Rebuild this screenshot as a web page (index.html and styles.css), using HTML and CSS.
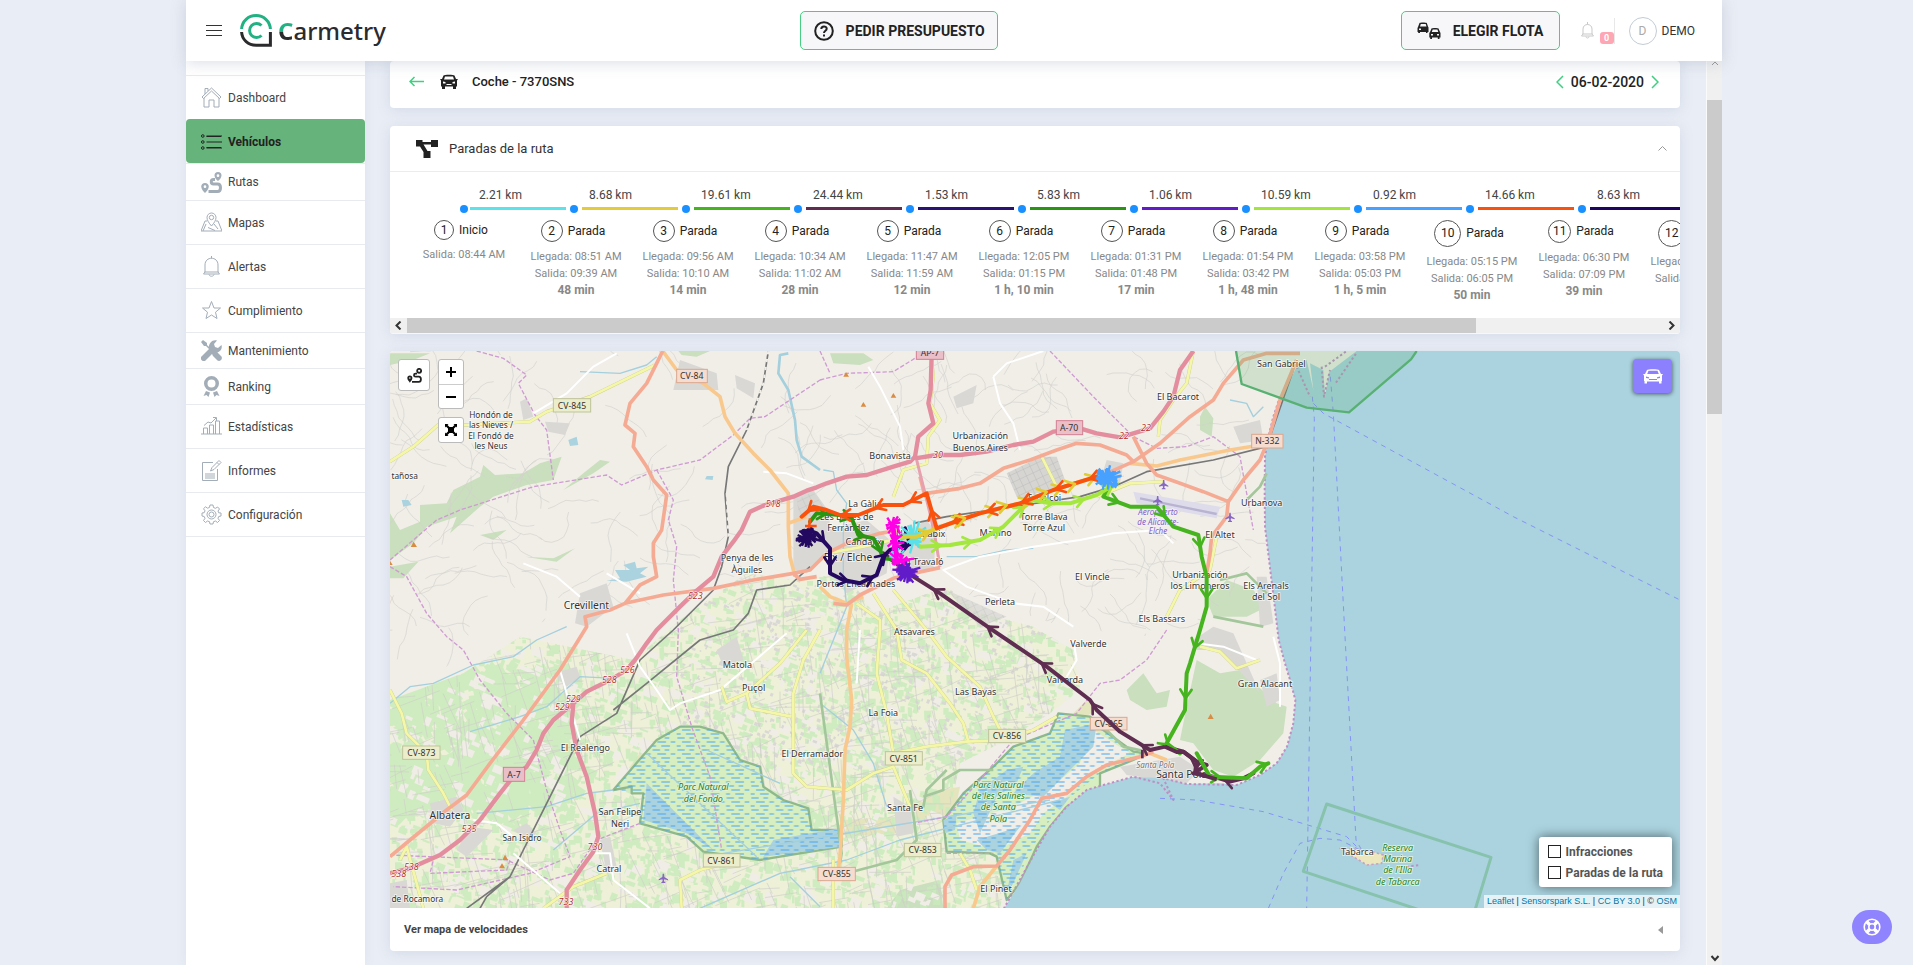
FILE: index.html
```html
<!DOCTYPE html>
<html lang="es">
<head>
<meta charset="utf-8">
<title>Carmetry</title>
<link rel="stylesheet" href="styles.css">
</head>
<body>
<div class="page">
  <header class="topbar">
    <div class="brand">
      <button class="menu-btn" aria-label="Menú"><span></span><span></span><span></span></button>
      <a class="logo" href="#">
        <svg width="32" height="33" viewBox="0 0 32 33" fill="none" stroke-width="3">
          <path d="M1.6 15C2 7 8.500 1.600 16 1.600S30 7 30.400 15" stroke="#21b183"/>
          <path d="M1.600 18C2 26 8.500 31.200 16 31.200H30.400V18" stroke="#2b2b2e"/>
          <path d="M21.500 11.500A7 7 0 1 0 21.500 21.500" stroke="#21b183"/>
        </svg>
        <span class="wordmark"><span class="wordmark-c">C</span>armetry</span>
      </a>
    </div>
    <button class="outline-btn quote-btn">
      <svg width="20" height="20" viewBox="0 0 20 20" fill="none" stroke="#222" stroke-width="2"><circle cx="10" cy="10" r="8.800"/><path d="M7.300 8C7.300 4.700 12.700 4.700 12.700 7.800 12.700 9.800 10 9.800 10 12"/><path d="M10 13.500V15.500"/></svg>
      PEDIR PRESUPUESTO
    </button>
    <div class="tools">
      <button class="outline-btn fleet-btn">
        <svg width="24" height="17" viewBox="0 0 24 17"><path fill="#222" fill-rule="evenodd" d="M1 5 2.500 1C3 .2 9 .2 9.800 1L11 4.500 11.500 5.500V10H10.500V11H9V10H3V11H1.200V10H.5V6ZM3 4.500H9.500L8.700 2H3.800ZM2 6.500V8H4V6.500ZM13 10 14.500 6.500C15 5.700 21 5.700 21.500 6.500L23 10 23.500 11V15.500H22.500V17H20.800V15.500H15V17H13.200V15.500H12.300V11ZM14.800 10H21.300L20.400 7.500H15.700ZM14 12V13.500H16V12ZM20 12V13.500H22V12Z"/></svg>
        ELEGIR FLOTA
      </button>
      <button class="bell-btn" aria-label="Notificaciones">
        <svg width="15" height="17" viewBox="0 0 15 17" fill="none" stroke="#c9c9c9"><path d="M3 12V7C3 1 12 1 12 7V12L13.500 14H1.500ZM7.500 0V2.500M6 14.500C6 16.500 9 16.500 9 14.500M2.500 12H12.500"/></svg>
        <span class="count">0</span>
      </button>
      <a class="user" href="#"><span class="avatar">D</span>DEMO</a>
    </div>
  </header>

  <div class="shell">
    <nav class="sidebar">
      <a class="nav-item" href="#"><svg class="nav-icon" viewBox="0 0 21 21"><path d="M1 10 10.500 1 20 10 18.500 11.500 10.500 4 2.500 11.500ZM3 11V20H8V13H13V20H18V11M4 7V1.500H7V4"/></svg>Dashboard</a>
      <a class="nav-item active" href="#"><svg class="nav-icon" viewBox="0 0 21 21"><path d="M5.500 5H21M5.500 11H21M5.500 17H21M5.500 5.500H20M5.500 16.500H20"/><circle cx="1.800" cy="5" r="1.300"/><circle cx="1.800" cy="11" r="1.300"/><circle cx="1.800" cy="17" r="1.300"/></svg>Vehículos</a>
      <a class="nav-item short" href="#"><svg class="nav-icon solid" viewBox="0 0 21 21"><path fill-rule="evenodd" d="M17 0A3.500 3.500 0 0 1 20.500 3.500C20.500 5.500 18.500 8 17 9 15.500 8 13.500 5.500 13.500 3.500A3.500 3.500 0 0 1 17 0ZM17 2.300A1.300 1.300 0 1 0 17 5 1.300 1.300 0 1 0 17 2.300ZM4 11A3.800 3.800 0 0 1 7.800 14.500C7.800 17 5.500 19.500 4 21 2.500 19.500 .2 17 .2 14.500A3.800 3.800 0 0 1 4 11ZM4 13.300A1.300 1.300 0 1 0 4 16 1.300 1.300 0 1 0 4 13.300Z"/><path class="line3" d="M14 7.500H12.500C9.500 7.500 9.500 12 12.500 12H16.500C20.500 12 20.500 19.500 16.500 19.500H7.500"/></svg>Rutas</a>
      <a class="nav-item" href="#"><svg class="nav-icon" viewBox="0 0 21 21"><path d="M10.500 14C8 11 6 8.500 6 5.500A4.500 4.500 0 0 1 15 5.500C15 8.500 13 11 10.500 14ZM6 9H4L0 19H21L17 9H15M2 19 5 12M7 15.500 14 18.500M13 12 17 17"/><circle cx="10.500" cy="5.500" r="2.200"/></svg>Mapas</a>
      <a class="nav-item" href="#"><svg class="nav-icon" viewBox="0 0 21 21"><path d="M4 16V9C4 0 17 0 17 9V16L18.500 18H2.500ZM10.500 0V2.500M8 18.500C8.500 20.800 12.500 20.800 13 18.500M3.500 16H17.500"/></svg>Alertas</a>
      <a class="nav-item" href="#"><svg class="nav-icon" viewBox="0 0 21 21"><path d="M10.500 1.500 13 8H19.500L14.500 12.200 16 18.500 10.500 15 5 18.500 6.500 12.200 1.500 8H8Z"/></svg>Cumplimiento</a>
      <a class="nav-item short" href="#"><svg class="nav-icon solid" viewBox="0 0 21 21"><path d="M0 2 2 0 6 3V5L11 10 10 11 5 6H3ZM12 11C14 10 15 11 16 12L20.500 16.500C22 19 19 22 16.500 20.500L12 16C11 15 10.500 13 12 11ZM0 17 8 9C7 4 11 -1 16 .5L13 4 14 7 17 8 20.500 5C22 10 17 14 12.500 12.500L4 21C1 22 -1 19 0 17Z"/></svg>Mantenimiento</a>
      <a class="nav-item short" href="#"><svg class="nav-icon solid" viewBox="0 0 21 21"><path fill-rule="evenodd" d="M10.500 0A7.500 7.500 0 1 1 10.500 15 7.500 7.500 0 1 1 10.500 0ZM10.500 3.500A4 4 0 1 0 10.500 11.500 4 4 0 1 0 10.500 3.500ZM5 15 9 16.500 7.500 21 5.500 19 2.500 20ZM16 15 12 16.500 13.500 21 15.500 19 18.500 20Z"/></svg>Ranking</a>
      <a class="nav-item" href="#"><svg class="nav-icon" viewBox="0 0 21 21"><path d="M0 18H21M2.500 18V12H6.500V18M8.500 18V9H12.500V18M14.500 18V5H18.500V18M3 9.500 7 6 10 7 15 2M12 1.500H15.500V5"/></svg>Estadísticas</a>
      <a class="nav-item" href="#"><svg class="nav-icon" viewBox="0 0 21 21"><path d="M12 2.500H1.500V20.500H16.500V9M4 14H14M4 16H14M4 18H14M9.500 11 11 7.500 18 .5 20 2.500 13 9.500ZM16 2.500 18 4.500"/></svg>Informes</a>
      <a class="nav-item" href="#"><svg class="nav-icon" viewBox="0 0 21 21"><path d="M9 1H12L12.500 3.500 14.500 4.300 16.600 3 18.500 5 17 7 17.700 8.800 20 9V12L17.700 12.500 17 14.300 18.500 16.500 16.500 18.500 14.500 17 12.500 17.700 12 20H9L8.500 17.700 6.500 17 4.500 18.500 2.500 16.500 4 14.300 3.200 12.500 1 12V9L3.200 8.700 4 6.800 2.500 4.700 4.500 2.800 6.600 4.200 8.500 3.400Z"/><circle cx="10.500" cy="10.500" r="4.500"/><circle cx="10.500" cy="10.500" r="2.500"/></svg>Configuración</a>
    </nav>

    <main class="content">
      <section class="card vehicle">
        <a class="icon-link" href="#" aria-label="Volver"><svg width="15" height="11" viewBox="0 0 15 11" fill="none" stroke="#3fcf80" stroke-width="1.500"><path d="M15 5.500H1M5.500 1 1 5.500 5.500 10"/></svg></a>
        <svg class="car" width="18" height="15" viewBox="0 0 18 15"><path fill="#222" fill-rule="evenodd" d="M0 5H2L3.500 1.500C4 .5 14 .5 14.500 1.500L16 5H18L17 6.500V12.500H16V15H13V12.500H5V15H2V12.500H1V6.500ZM4 5.500H14L13 2.500H5ZM3 7.500V9.500H5.500V8ZM15 7.500 12.500 8V9.500H15ZM6.500 10V11H11.500V10Z"/></svg>
        <h1>Coche - 7370SNS</h1>
        <div class="date">
          <button aria-label="Día anterior"><svg width="8" height="14" viewBox="0 0 8 14"><path d="M7 1 1 7 7 13"/></svg></button>
          <span>06-02-2020</span>
          <button aria-label="Día siguiente"><svg width="8" height="14" viewBox="0 0 8 14"><path d="M1 1 7 7 1 13"/></svg></button>
        </div>
      </section>

      <section class="card route">
        <div class="route-head">
          <svg width="22" height="18" viewBox="0 0 22 18"><path fill="#222" d="M0 0H6.500V2H15V0H22V7H15V4.500H7.500L11.500 11H14.500V18H7.500V12L4 6.500H0Z"/></svg>
          <h2>Paradas de la ruta</h2>
          <button aria-label="Contraer"><svg width="9" height="5" viewBox="0 0 9 5"><path d="M.5 4.500 4.500 .5 8.500 4.500"/></svg></button>
        </div>
        <div class="timeline">
          <ol class="legs">
            <li class="c1">2.21 km</li><li class="c2">8.68 km</li><li class="c3">19.61 km</li><li class="c4">24.44 km</li><li class="c5">1.53 km</li><li class="c6">5.83 km</li><li class="c7">1.06 km</li><li class="c8">10.59 km</li><li class="c9">0.92 km</li><li class="c10">14.66 km</li><li class="c11">8.63 km</li>
          </ol>
          <ol class="stops">
            <li><h3><i class="sm">1</i>Inicio</h3><p>Salida: 08:44 AM</p></li>
            <li><h3><i>2</i>Parada</h3><p>Llegada: 08:51 AM</p><p>Salida: 09:39 AM</p><b>48 min</b></li>
            <li><h3><i>3</i>Parada</h3><p>Llegada: 09:56 AM</p><p>Salida: 10:10 AM</p><b>14 min</b></li>
            <li><h3><i>4</i>Parada</h3><p>Llegada: 10:34 AM</p><p>Salida: 11:02 AM</p><b>28 min</b></li>
            <li><h3><i>5</i>Parada</h3><p>Llegada: 11:47 AM</p><p>Salida: 11:59 AM</p><b>12 min</b></li>
            <li><h3><i>6</i>Parada</h3><p>Llegada: 12:05 PM</p><p>Salida: 01:15 PM</p><b>1 h, 10 min</b></li>
            <li><h3><i>7</i>Parada</h3><p>Llegada: 01:31 PM</p><p>Salida: 01:48 PM</p><b>17 min</b></li>
            <li><h3><i>8</i>Parada</h3><p>Llegada: 01:54 PM</p><p>Salida: 03:42 PM</p><b>1 h, 48 min</b></li>
            <li><h3><i>9</i>Parada</h3><p>Llegada: 03:58 PM</p><p>Salida: 05:03 PM</p><b>1 h, 5 min</b></li>
            <li><h3><i class="lg">10</i>Parada</h3><p>Llegada: 05:15 PM</p><p>Salida: 06:05 PM</p><b>50 min</b></li>
            <li><h3><i class="md">11</i>Parada</h3><p>Llegada: 06:30 PM</p><p>Salida: 07:09 PM</p><b>39 min</b></li>
            <li><h3><i class="lg">12</i>Parada</h3><p>Llegada: 07:25 PM</p><p>Salida: 07:40 PM</p></li>
          </ol>
        </div>
        <div class="hscroll">
          <svg width="17" height="9" viewBox="0 0 17 9"><path d="M10.500 .5 6.500 4.500 10.500 8.500"/></svg>
          <span class="hthumb"></span><span class="hrest"></span>
          <svg width="17" height="9" viewBox="0 0 17 9"><path d="M6.500 .5 10.500 4.500 6.500 8.500"/></svg>
        </div>
      </section>

      <section class="card map-card">
        <div class="map">
          <svg class="map-svg" id="map" viewBox="30 33 3870 1671">
            <defs>
              <pattern id="marsh" width="74" height="36" patternUnits="userSpaceOnUse"><path d="M4 6H26M40 6H54M18 18H44M58 18H72M2 30H14M30 30H56" stroke="#4aa5f0" stroke-width="3"/></pattern>
              <pattern id="grid" width="22" height="22" patternUnits="userSpaceOnUse" patternTransform="rotate(-25)"><path fill="#d6d5d2" d="M0 0H22V22H0Z"/><path d="M0 0H22M0 0V22" stroke="#bbb" stroke-width="3"/></pattern>
              <clipPath id="farm"><path d="M30 1080 250 1000 420 890 760 960 900 840 1100 700 1240 720 1400 700 1480 820 1700 740 1800 820 1960 860 2080 930 2100 1050 2010 1120 1880 1200 1740 1270 1700 1450 1890 1560 1860 1705H30Z"/></clipPath>
              <clipPath id="upland"><path d="M30 33H2700V110L2650 350 2660 700 2560 760 2400 900 2050 860 1750 760 1200 650 900 780 400 860 30 1080Z"/></clipPath>
              <path id="local-roads" d="M30 365 100 320 180 250 260 255 450 245 500 215 630 170 825 75M1655 60 1660 110 1650 190 1680 240 1645 290 1640 370 1570 390 1540 470M2440 33 2420 130 2380 180 2340 240 2335 290M30 1050 65 1120 80 1180 140 1240 145 1290 190 1360 215 1410M1280 870 1200 970 1100 1060 1040 1085 1025 1040M1100 1060 1110 1105 1235 1130M1320 870 1270 960 1240 1060 1240 1300 1280 1340 1400 1350 1480 1300 1540 1280 1590 1400M1500 870 1490 1000 1520 1120 1540 1240 1540 1280M1540 1240 1640 1220 1760 1205 1870 1200 1960 1170 2030 1130M1430 790 1500 840 1500 870M1480 760 1550 870 1565 960 1640 1000 1710 1090 1750 1150 1765 1205M1540 750 1640 870 1700 950 1800 1040 1840 1130 1870 1190M490 1705 580 1640 680 1600M1080 1558 960 1590 900 1620 905 1705M1985 350 2030 440M2150 470 2250 430 2350 425M2510 590 2490 690 2400 750 2360 830M2460 920 2520 935 2570 985 2640 960M1360 1560 1360 1705M1740 1540 1770 1590 1790 1650M1340 640 1450 620 1580 590M60 1560 80 1520 110 1630 130 1705"/>
            </defs>
            <path fill="#f1eee8" d="M0 0H4000V1800H0Z"/>
            <path fill="#eef0d8" d="M30 1080 250 1000 420 890 760 960 900 840 1100 700 1240 720 1400 700 1480 820 1700 740 1800 820 1960 860 2080 930 2100 1050 2010 1120 1880 1200 1740 1270 1700 1450 1890 1560 1860 1705H30Z"/>
            <path fill="#c9dfbd" d="M30 520 60 570 120 545 120 495 200 490 220 450 300 410 310 375 345 405 430 400 480 370 545 350 520 420 440 435 340 470 300 500 210 580 230 530 140 560 100 610 30 660ZM550 450 610 400 660 360 690 365 640 400ZM300 585 380 570 340 600ZM435 650 520 655 585 625 530 665ZM30 40H150L100 60 30 75ZM30 680 115 665 70 715 30 715ZM895 33H990L950 50 905 45ZM1350 40H1450L1480 60 1440 75 1360 70ZM2460 230 2475 200 2500 235 2495 290 2460 270Z"/>
            <path fill="#c9dfbd" d="M2450 960 2520 1000 2580 990 2690 1090 2720 1100 2710 1180 2640 1260 2560 1310 2500 1290 2440 1210 2400 1200 2420 1100ZM2250 1080 2240 1050 2290 1000 2330 1060 2370 1050 2360 1100 2300 1110ZM2480 780 2540 720 2620 750 2660 800 2600 830 2500 830ZM1560 1650 1680 1620 1690 1705H1520Z"/>
            <path fill="#e4e5bd" d="M700 1350 800 1210 860 1190 840 1270 760 1340ZM1390 1440 1540 1430 1550 1480 1400 1490ZM1620 1360 1740 1340 1720 1440 1600 1450ZM2080 1120 2120 1080 2150 1110 2100 1140Z"/>
            <g id="farmland" clip-path="url(#farm)"></g>
            <g id="tracks" clip-path="url(#upland)"></g>
            <path fill="#d9d8d5" d="M420 185 440 175 460 230 430 240ZM495 245 570 250 555 285 505 275ZM900 60 1010 100 1015 150 880 150ZM1065 105 1125 130 1120 175 1070 145ZM1720 170 1790 135 1780 190 1730 205ZM1240 470 1300 450 1350 520 1345 640 1280 700 1240 690ZM1340 570 1460 540 1530 600 1520 700 1400 760 1350 700ZM1540 600 1640 540 1670 580 1660 690 1550 690ZM2180 360 2230 370 2220 430 2160 425ZM2560 260 2640 240 2650 300 2580 310ZM150 1390 230 1370 250 1410 210 1460 160 1450ZM600 760 680 730 700 800 620 860 585 850ZM1540 1370 1590 1400 1600 1480 1550 1490ZM2220 1280 2400 1250 2460 1290 2420 1330 2240 1305ZM660 1500 690 1490 710 1580 680 1600ZM30 1630 80 1620 90 1705H30ZM230 1530 270 1460 340 1470 260 1550ZM1010 930 1070 890 1090 960 1030 980ZM2640 1020 2690 1000 2700 1080 2660 1100ZM2640 1060 2560 880 2500 860 2440 900 2450 930 2520 930ZM2630 710 2660 710 2680 850 2640 860ZM520 1000 590 980 600 1010 560 1040ZM400 1470 440 1450 470 1480 440 1500Z"/>
            <path fill="url(#grid)" d="M1880 400 1980 350 2030 350 2055 420 1960 480 1910 470Z"/>
            <path fill="url(#grid)" opacity=".7" d="M1250 480 1300 455 1340 515 1260 540ZM1700 750 1880 830 1800 860Z"/>
            <path fill="#dedceb" d="M2260 455 2520 500 2510 535 2270 490Z"/><path d="M2280 475 2510 522" stroke="#b9b3d2" stroke-width="7"/>
            <g fill="#d7eec0" stroke="#8fb98a" stroke-width="7"><path d="M700 1350 760 1280 830 1200 900 1160H960L1030 1180 1080 1260 1140 1280 1150 1340 1210 1380 1285 1405 1295 1470H1385V1520L1320 1530 1140 1560 970 1535 920 1490 780 1450 790 1360H755V1340Z"/><path d="M2035 1120 2130 1130 2170 1170 2260 1235 2300 1240 2260 1260 2160 1300 2160 1340 2060 1400 2010 1460 1970 1520 1920 1630 1880 1680 1850 1550 1830 1540 1700 1535 1690 1440 1750 1360 1840 1280 1900 1220 2010 1180Z"/></g>
            <path fill="#f1eee8" d="M2140 1170 2250 1240 2150 1290 2060 1370 1990 1420 1950 1480 1850 1530 1740 1500 1730 1450 1900 1400 2030 1330 2100 1270Z"/>
            <path fill="#aad3df" d="M800 1330 870 1400 1000 1530 920 1480 790 1440ZM1290 1480 1385 1465V1520L1150 1550 1180 1500ZM2055 1170 2150 1150 2140 1220 2060 1300 1990 1370 1900 1360 1960 1300 2040 1250ZM1800 1350 1880 1290 1930 1280 1910 1330 1850 1370 1800 1480 1780 1420ZM1690 1440 1730 1425 1725 1470 1695 1480ZM1790 1500 1920 1460 1860 1540 1820 1530ZM2010 1390 2070 1370 2040 1410ZM1900 1560 1940 1540 1900 1630 1880 1660ZM565 300 590 290 595 315 570 318ZM65 480 85 480 95 495 70 500ZM980 408 1000 408 998 420 975 418ZM680 722 720 715 705 690 750 690 730 675 765 665 770 685 805 680 780 700 800 710 740 725Z"/>
            <path fill="url(#marsh)" d="M700 1350 760 1280 830 1200 900 1160H960L1030 1180 1080 1260 1140 1280 1150 1340 1210 1380 1285 1405 1295 1470H1385V1520L1320 1530 1140 1560 970 1535 920 1490 780 1450 790 1360ZM2035 1120 2130 1130 2170 1170 2260 1235 2300 1240 2260 1260 2160 1300 2060 1380 2010 1440 1970 1500 1920 1600 1880 1680 1850 1550 1830 1540 1700 1535 1690 1440 1750 1360 1840 1280 1900 1220 2010 1180Z"/>

            <path class="sea" d="M2735 110 2750 80 2780 60 2800 150 2790 70 2830 90 2835 168 2848 95 2930 33H4000V1705H1872L1920 1630 1975 1520 2010 1460 2060 1400 2120 1350 2170 1335 2260 1310 2350 1315 2420 1332 2520 1330 2570 1335 2640 1305 2690 1270 2721 1220 2740 1150 2746 1080 2730 1020 2715 970 2696 900 2682 780 2672 700 2655 560 2654 450 2655 350 2665 290 2680 230 2700 170Z"/>
            <path class="coast" d="M2700 170 2680 230 2665 290 2655 350 2654 450 2655 560 2672 700 2682 780 2696 900 2715 970 2730 1020 2746 1080 2740 1150 2721 1220 2690 1270 2640 1305 2570 1335 2420 1332 2350 1315 2380 1380 2340 1330 2260 1310 2170 1335 2120 1350 2060 1400 2010 1460 1975 1520 1872 1705M2750 80 2790 170M2825 80 2832 170 2850 90M2868 128 2930 38M2835 80 2900 33"/>
            <path class="water" d="M600 95 720 100 800 75 830 50M30 1090 90 1040 160 1030 280 975 400 950 470 900 560 860M270 1175 420 1130 500 1100 600 1010 700 1015M290 1420 500 1400 620 1360 700 1350M520 1530 650 1420 780 1390M1330 390 1360 395 1370 450 1400 490 1390 560 1390 700 1400 800 1320 1000M1320 1090 1420 1170 1480 1270 1520 1400M960 1705 1200 1600 1400 1560 1560 1500 2040 1380M1230 1610 1320 1700M1030 1540 2010 1380M1700 650 1790 650 1880 630 1960 625M2550 180 2600 190 2620 230 2650 200M1200 1330 980 1230M800 1240 1130 1550"/>
            <path class="river" d="M1225 40 1200 45 1195 100 1225 150 1245 240 1250 300 1265 350 1320 390"/>
            <path class="boundary" d="M290 33 370 55 440 105 415 130 465 225 500 270 520 420M30 660 100 600 170 540 240 510 460 440 680 405 725 435 830 390 960 360 1060 285 1110 235 1155 230 1320 120M1320 120 1400 100 1540 95 1640 33M1320 33 1350 100M830 390 880 480 865 540 890 620 880 720 895 870 890 1010 935 1160 990 1310 1025 1530M30 680 80 710 140 820 200 890 250 930 300 1020 380 1120 460 1200 500 1350 540 1470 570 1550 450 1600 230 1650 40 1640M30 1545 390 1560 380 1590 150 1600 160 1560M780 1450 650 1500 580 1600 510 1620 380 1560M2010 33 2140 170 2260 290 2330 325 2420 320 2500 290 2580 350 2620 570M2360 870 2300 960 2220 1020 2160 1030 2090 1120 1900 1200 1800 1320 1700 1430 1600 1450M1700 1540 1840 1540"/>
            <path class="protected" d="M1320 1060 1385 1540 1380 1570M1700 1290 1640 1350 1630 1400 1590 1400M1590 1350 1610 1500 1550 1560 1400 1600 1320 1620M2160 1150 2230 1220 2300 1235M1840 1290 1740 1290 1690 1320 1690 1350 1630 1370M2600 480 2640 440 2660 400M2520 720 2600 700 2660 760M2500 830 2650 860"/>
            <path class="rail" d="M1165 33 1150 130 1100 270 1045 380 1035 460 1045 590 1025 680 1000 750 880 870 780 960 710 1120 600 1190 500 1390 430 1530 390 1610 260 1705M390 1610 320 1670 300 1705M1290 680 1230 735 1130 750 1105 820 1060 870 960 900 800 1030 700 1110"/>
            <path class="rail" d="M1600 550 1700 530 1900 500 2100 470 2200 440 2300 395 2500 360 2660 320 2740 90"/>
            <path class="rail-dash" d="M1165 33 1150 130 1100 270M1040 460 1045 590"/>
            <path class="white-road" d="M460 220 560 160 640 80 710 40M1465 80 1500 140 1560 260 1570 330M1840 110 1880 70 1990 33M1840 110 1860 190 1900 250 1920 330M2100 600 1960 620 1800 650 1690 690 1760 740 1900 790 1990 800 2080 860M2100 600 2200 580 2340 570 2380 610M540 990 560 1060 600 1200M640 1540 690 1540 700 1620 810 1705M280 1440 350 1450 400 1490M400 1540 470 1600 540 1660M680 700 780 760M430 670 530 710 600 770M740 880 780 980 830 1050 870 1110 900 1090 1020 1050 1220 880M2080 900 2090 960 2060 1010M1440 870 1430 1030M2450 910 2530 920 2630 960M1150 395 1220 400 1300 430M2680 890 2700 970 2700 1100"/>
            <use class="yellow-case" href="#local-roads"/>
            <use class="yellow" href="#local-roads"/>
            <path class="orange-road" d="M848 33 890 90 970 130 1020 170 1035 230 1065 280 1120 340 1170 390 1225 460 1225 560 1230 650 1245 710M1225 550 1280 530M1415 790 1400 870V950L1415 1080 1410 1160 1395 1230 1390 1380 1380 1550 1370 1620M2250 370 2330 378 2400 360 2550 330 2660 312M1320 740 1350 770 1400 790 1450 770M1850 1578 1800 1640 1780 1705M2310 1240 2360 1260"/>
            <path class="salmon-road" d="M30 1550 90 1500 200 1410 260 1365 330 1270 430 1140 540 990 620 860 615 830 690 810 735 790 850 765 1000 745 1120 720 1240 700 1290 690 1340 640 1400 610 1500 580 1560 570M735 790 780 735 830 710 820 650 820 610 845 570 855 500 860 465 820 420 800 380 760 320 765 280 735 255 750 190 800 130 830 70 848 33M1640 460 1740 445 1800 430 1870 385 1950 360 2030 330 2090 310 2160 315 2240 345 2260 365 2340 310 2430 230 2500 180 2530 130 2590 60 2660 40 2760 40M2180 400 2260 365M2260 290 2300 370 2330 405 2400 430 2470 455 2545 485 2540 530 2495 590 2490 640 2480 700M2545 485 2590 420 2640 360 2665 300 2700 180 2750 60M1240 700 1260 718 1310 710M1360 790 1400 795 1440 765 1540 715 1600 700 1680 683M1695 1705V1640L1715 1605 1780 1580 1850 1578 1890 1530 1950 1440 1985 1375 2060 1360 2120 1310 2180 1275 2280 1250 2320 1235M1620 410 1635 470"/>
            <path class="motorway" d="M1655 33 1652 150 1645 190 1660 250 1615 290 1605 350 1590 365 1540 380 1460 405 1400 410 1340 430 1310 442 1280 452 1240 470 1150 497 1110 515 1085 570 1060 605 1025 650 1000 710 950 752 900 800 830 870 800 910 765 960 740 990 690 1020 620 1055 580 1090 520 1140 490 1180 470 1230 440 1280 400 1310 360 1360 300 1440 240 1500 180 1545 90 1585 30 1600M580 1090 575 1150 590 1230 620 1310 645 1420 655 1490 640 1535 600 1590 560 1650V1705M1605 355 1670 345 1740 345 1820 335 1900 315 1960 305 2020 275 2100 265 2150 280 2220 292 2260 280 2310 265 2350 215 2380 170 2400 90 2440 33"/>
            <path class="spur" d="M1610 360 1630 440 1650 520 1665 590 1680 680"/>
            <path class="ferry" fill="none" stroke="#8494f5" stroke-width="3" stroke-dasharray="15 15" d="M2797 170 2803 235 2780 1705M2851 110 2860 220 2894 870 2928 1500 2945 1530M2800 190 2830 220 3400 530 3900 780M2340 1375 2450 1380 2650 1415 2800 1460 2900 1490 2940 1530M2665 1705 2710 1600 2760 1510 2820 1495 2880 1500 2940 1530"/>
            <path fill="#5ab26b" fill-opacity=".22" stroke="#58b173" stroke-width="7" d="M2568 33 2585 132 2780 203 2907 217 3093 58 3110 33"/>
            <path fill="none" stroke="#87c2ad" stroke-width="9" d="M2840 1392 3333 1552 3270 1760 2770 1594Z"/>
            <path fill="#ece7bd" stroke="#c9a0c4" stroke-width="5" stroke-dasharray="7 7" d="M2880 1525 2960 1530 3010 1545 3005 1570 2960 1575Z"/><path class="coast" d="M3080 1580 3120 1575"/>
            <g fill="#d98d43"><path d="M92 621 101 605 111 621ZM30 675V662L38 675ZM1390 110 1398 96 1407 110ZM1532 173 1540 159 1549 173ZM1442 200 1450 186 1459 200ZM367 1560 375 1544 384 1560ZM357 1585 366 1570 375 1585ZM2483 1137 2492 1121 2501 1137Z"/></g>
            <g id="planes" fill="#8766c4"></g>

            <g class="shields">
              <g class="sh-salmon"><rect x="890" y="88" width="92" height="40"/><rect x="2615" y="283" width="94" height="41"/><rect x="2131" y="1132" width="110" height="38"/><rect x="1314" y="1582" width="112" height="40"/></g>
              <g class="sh-yellow"><rect x="520" y="176" width="112" height="40"/><rect x="68" y="1218" width="112" height="40"/><rect x="970" y="1541" width="110" height="40"/><rect x="1826" y="1168" width="111" height="40"/><rect x="1516" y="1235" width="111" height="40"/><rect x="1573" y="1510" width="110" height="40"/></g>
              <g class="sh-pink"><rect x="370" y="1282" width="64" height="42"/><rect x="1609" y="18" width="82" height="40"/><rect x="2029" y="242" width="79" height="42"/></g>
              <text x="935" y="118">CV-84</text><text x="2662" y="313">N-332</text><text x="2186" y="1161">CV-865</text><text x="1370" y="1612">CV-855</text>
              <text x="576" y="206">CV-845</text><text x="124" y="1248">CV-873</text><text x="1024" y="1571">CV-861</text><text x="1881" y="1197">CV-856</text><text x="1571" y="1265">CV-851</text><text x="1628" y="1540">CV-853</text>
              <text x="402" y="1313">A-7</text><text x="1650" y="49">AP-7</text><text x="2067" y="273">A-70</text>
            </g>
            <g class="exits"><text x="1179" y="500">518</text><text x="946" y="777">523</text><text x="742" y="1000">526</text><text x="688" y="1030">528</text><text x="580" y="1086">529</text><text x="547" y="1111">529</text><text x="267" y="1475">535</text><text x="94" y="1589">538</text><text x="56" y="1612">538</text><text x="645" y="1531">730</text><text x="558" y="1696">733</text><text x="1674" y="353">30</text><text x="2232" y="298">22</text><text x="2298" y="274">22</text></g>
            <g class="places small"><text x="333" y="234">Hondón de</text><text x="333" y="265">las Nieves /</text><text x="333" y="296">El Fondó de</text><text x="333" y="327">les Neus</text><text x="74" y="418">tañosa</text><text x="426" y="1504">San Isidro</text><text x="112" y="1685">de Rocamora</text></g>
            <g class="places"><text x="1101" y="664">Penya de les</text><text x="1101" y="698">Àguiles</text><text x="1530" y="358">Bonavista</text><text x="1801" y="298">Urbanización</text><text x="1801" y="332">Buenos Aires</text><text x="2394" y="180">El Bacarot</text><text x="1455" y="501">La Gàlia</text><text x="1400" y="540">Les Bases de</text><text x="1405" y="574">Ferràndez</text><text x="1451" y="616">Candalix</text><text x="1622" y="592">Nou Altabix</text><text x="1992" y="483">Tabalcoi</text><text x="1992" y="540">Torre Blava</text><text x="1992" y="573">Torre Azul</text><text x="1847" y="589">Maitino</text><text x="1630" y="674">El Travaló</text><text x="1428" y="741">Portes Encarnades</text><text x="2137" y="721">El Vincle</text><text x="1860" y="794">Perleta</text><text x="2345" y="846">Els Bassars</text><text x="2520" y="594">El Altet</text><text x="2645" y="498">Urbanova</text><text x="2460" y="713">Urbanización</text><text x="2460" y="747">los Limoneros</text><text x="2658" y="746">Els Arenals</text><text x="2658" y="780">del Sol</text><text x="2704" y="80">San Gabriel</text><text x="1603" y="884">Atsavares</text><text x="2125" y="921">Valverde</text><text x="2055" y="1030">Valverda</text><text x="1787" y="1066">Las Bayas</text><text x="1510" y="1127">La Foia</text><text x="1297" y="1250">El Derramador</text><text x="1575" y="1412">Santa Fe</text><text x="1848" y="1655">El Pinet</text><text x="2655" y="1042">Gran Alacant</text><text x="1072" y="984">Matola</text><text x="1121" y="1053">Puçol</text><text x="616" y="1232">El Realengo</text><text x="720" y="1426">San Felipe</text><text x="720" y="1460">Neri</text><text x="687" y="1597">Catral</text><text x="2932" y="1545">Tabarca</text><text class="italic" x="2326" y="1285">Santa Pola</text></g>
            <g class="places big"><text x="619" y="806">Crevillent</text><text x="210" y="1436">Albatera</text><text x="1404" y="664">Elx / Elche</text><text x="2405" y="1313">Santa Pola</text></g>
            <g class="park"><text x="970" y="1351">Parc Natural</text><text x="970" y="1385">del Fondo</text><text x="1855" y="1343">Parc Natural</text><text x="1855" y="1377">de les Salines</text><text x="1855" y="1411">de Santa</text><text x="1855" y="1445">Pola</text><text x="3053" y="1532">Reserva</text><text x="3053" y="1566">Marina</text><text x="3053" y="1600">de l'Illa</text><text x="3053" y="1634">de Tabarca</text></g>
            <g class="airport"><text x="2334" y="526">Aeropuerto</text><text x="2334" y="554">de Alicante-</text><text x="2334" y="582">Elche</text></g>
            <g id="routes"></g>
          </svg>
          <div class="ctl-left">
            <button class="ctl route-ctl" aria-label="Ruta"><svg width="15" height="15" viewBox="0 0 21 21"><path fill="none" stroke="#222" stroke-width="2.500" d="M14 8H12C9 8 9 12 12 12H16.500C20.500 12 20.500 19.500 16.500 19.500H7"/><circle cx="17" cy="4" r="2.800" fill="none" stroke="#222" stroke-width="2.500"/><circle cx="4" cy="14" r="2.300" fill="none" stroke="#222" stroke-width="2.500"/><path d="M1 16H7L4 20.500Z" fill="#222"/></svg></button>
            <div class="ctl-col">
              <div class="zoom"><button aria-label="Acercar"><svg width="12" height="12" viewBox="0 0 12 12"><path d="M1 6H11M6 1V11" stroke="#000" stroke-width="2"/></svg></button><button aria-label="Alejar"><svg width="12" height="12" viewBox="0 0 12 12"><path d="M1 6H11" stroke="#000" stroke-width="2"/></svg></button></div>
              <button class="ctl full-ctl" aria-label="Pantalla completa"><svg width="12" height="12" viewBox="0 0 12 12"><path d="M0 0H3.500L2.500 1 4.500 3H7.500L9.500 1 8.500 0H12V3.500L11 2.500 9 4.500V7.500L11 9.500 12 8.500V12H8.500L9.500 11 7.500 9H4.500L2.500 11 3.500 12H0V8.500L1 9.500 3 7.500V4.500L1 2.500 0 3.500Z"/></svg></button>
            </div>
          </div>
          <button class="car-ctl" aria-label="Vehículo"><svg width="20" height="15" viewBox="0 0 20 15"><path fill="#fff" fill-rule="evenodd" d="M0 5H2L4 1C4.500 0 15.500 0 16 1L18 5H20L19 6.500V12H18.500V14.500H16V12.500H4V14.500H1.500V12H1V6.500ZM4.200 5H15.800L14.500 1.800H5.500ZM3 7.500V9L6 9.500V8.300ZM17 7.500 14 8.300V9.500L17 9ZM6 11H14V10H6Z"/></svg></button>
          <div class="layers"><label><input type="checkbox">Infracciones</label><label><input type="checkbox">Paradas de la ruta</label></div>
          <div class="attribution"><a href="#">Leaflet</a> | <a href="#">Sensorspark S.L.</a> | <a href="#">CC BY 3.0</a> | © <a href="#">OSM</a></div>
        </div>
        <button class="speed">Ver mapa de velocidades<svg width="5" height="8" viewBox="0 0 5 8"><path fill="#999" d="M5 0V8L0 4Z"/></svg></button>
      </section>
    </main>

    <div class="vscroll">
      <svg width="16" height="13" viewBox="0 0 16 13"><path class="dim" d="M5 4 8 1 11 4"/></svg>
      <span class="vtop"></span><span class="vthumb"></span><span class="vrest"></span>
      <svg width="16" height="14" viewBox="0 0 16 14"><path d="M4.500 5 8 9 11.500 5"/></svg>
    </div>
  </div>
  <button class="help" aria-label="Ayuda"><svg width="18" height="18" viewBox="0 0 18 18" fill="none" stroke="#fff"><circle cx="9" cy="9" r="7.800" stroke-width="1.600"/><circle cx="9" cy="9" r="3.200" stroke-width="1.600"/><path stroke-width="3.500" d="M3.500 3.500 6.500 6.500M14.500 3.500 11.500 6.500M3.500 14.500 6.500 11.500M14.500 14.500 11.500 11.500"/></svg></button>
</div>
<script src="map.js"></script>
</body>
</html>
```

FILE: styles.css
```css
* { box-sizing: border-box; margin: 0; padding: 0; }
body { background: #e9edf5; font-family: Roboto, "Liberation Sans", sans-serif; font-size: 12px; color: #444; padding-right: 5px; overflow: hidden; }
a { color: inherit; text-decoration: none; }
button { font: inherit; color: inherit; background: none; border: 0; display: flex; align-items: center; }
ol { list-style: none; }
svg { display: block; flex: none; }
.page { max-width: 1536px; height: 100vh; margin: 0 auto; display: flex; flex-direction: column; }

.topbar { position: relative; z-index: 2; flex: none; height: 61px; padding: 0 27px 0 20px; background: #fff; display: flex; align-items: center; box-shadow: 0 2px 14px rgba(110, 125, 155, .25); }
.brand { display: flex; align-items: center; gap: 18px; padding-right: 12px; }
.menu-btn { flex-direction: column; gap: 4px; width: 16px; }
.menu-btn span { width: 16px; height: 1px; background: #333; }
.logo { display: flex; align-items: center; gap: 6px; }
.wordmark { font: 500 24px/32px "Noto Sans", sans-serif; color: #2b2b2e; }
.wordmark-c { display: inline-block; font-weight: 700; background: linear-gradient(#21b183 54%, #2b2b2e 54%); background-clip: text; -webkit-background-clip: text; color: transparent; }
.outline-btn { height: 39px; border: 1px solid #46cf83; border-radius: 5px; background: #f7f7fa; font-size: 14px; font-weight: 700; color: #222; gap: 12px; justify-content: center; white-space: nowrap; }
.quote-btn { min-width: 198px; margin: 0 auto; }
.fleet-btn { min-width: 159px; }
.tools { display: flex; align-items: center; }
.bell-btn { align-self: center; margin-left: 20px; width: 35px; height: 26px; border-right: 1px solid #e8e8e8; gap: 5px; }
.count { align-self: flex-end; width: 14px; height: 12px; border-radius: 3px; background: #ffa6b5; color: #fff; font-size: 9px; line-height: 12px; font-weight: 700; }
.user { display: flex; align-items: center; gap: 5px; margin-left: 14px; font-size: 12px; color: #333; }
.avatar { width: 28px; height: 28px; border: 1px solid #c3ccd4; border-radius: 50%; line-height: 26px; text-align: center; color: #aaa; }

.shell { flex: 1; min-height: 0; display: flex; }
.sidebar { width: 179px; flex: none; background: #fff; padding-top: 14px; box-shadow: 0 0 10px rgba(120, 140, 180, .1); }
.nav-item { height: 44px; display: flex; align-items: center; gap: 6px; padding-left: 15px; border-top: 1px solid #e7eaee; color: #444; }
.nav-item:last-child { border-bottom: 1px solid #e7eaee; height: 45px; }
.nav-item.short { height: 36px; }
.nav-item.active { background: #67b37c; border-radius: 4px; border-color: transparent; font-weight: 700; color: #222; }
.nav-item.active + .short { height: 37px; }
.nav-icon { width: 21px; height: 21px; fill: none; stroke: #a3adb8; }
.nav-icon.solid { fill: #a3adb8; stroke: none; }
.nav-icon .line3 { fill: none; stroke: #a3adb8; stroke-width: 3; }
.active .nav-icon { stroke: #222; }

.content { flex: 1; min-width: 0; padding: 0 26px 0 25px; }
.card { background: #fff; border-radius: 4px; box-shadow: 0 2px 14px rgba(120, 140, 180, .2); margin-bottom: 18px; }
.vehicle { height: 47px; padding: 0 21px 6px 19px; display: flex; align-items: center; }
.vehicle .car { margin: 0 14px 0 16px; }
h1 { font-size: 13px; font-weight: 500; color: #222; }
.date { margin-left: auto; display: flex; align-items: center; gap: 7px; font-size: 14px; font-weight: 500; color: #222; }
.date path { fill: none; stroke: #3fcf80; stroke-width: 1.500; }
.route { overflow: hidden; margin-bottom: 17px; }
.route-head { height: 46px; padding: 0 13px 0 26px; display: flex; align-items: center; border-bottom: 1px solid #e9ecf1; }
h2 { font: 400 13px/20px Roboto, sans-serif; color: #333; margin-left: 11px; }
.route-head button { margin-left: auto; }
.route-head button path { fill: none; stroke: #999; }
.timeline { height: 146px; overflow: hidden; padding: 16px 0 0 18px; }
.legs, .stops { display: flex; width: max-content; }
.legs { padding-left: 52px; }
.legs li { width: 112px; height: 25px; line-height: 14px; padding-left: 19px; color: #444; position: relative; }
.legs li:first-child { width: 110px; }
.legs li::before { content: ""; position: absolute; left: 0; bottom: 0; width: 8px; height: 8px; border-radius: 50%; background: #1a8fff; }
.legs li::after { content: ""; position: absolute; left: 12px; right: 4px; bottom: 3px; height: 3px; background: currentColor; }
.legs .c1::after { color: #5ce2ea; left: 10px; } .c2::after { color: #e3cb3c; } .c3::after { color: #46b41e; } .c4::after { color: #5e2d50; }
.c5::after { color: #2a1275; } .c6::after { color: #2a9512; } .c7::after { color: #611bc9; } .c8::after { color: #a2e53e; }
.c9::after { color: #48a0ff; } .c10::after { color: #f9520f; } .c11::after { color: #1e055f; }
.stops { padding-top: 7px; }
.stops li { width: 112px; text-align: center; line-height: 17px; color: #888; white-space: nowrap; }
.stops p { font-size: 11px; }
h3 { display: flex; align-items: center; justify-content: center; gap: 5px; margin: 0 6px 6px 0; font-size: 12px; font-weight: 400; color: #222; }
h3 i { width: 22px; height: 22px; display: grid; place-items: center; border: 1px solid #555; border-radius: 50%; font-style: normal; }
h3 .sm { width: 20px; height: 20px; } h3 .md { width: 23px; height: 23px; } h3 .lg { width: 27px; height: 27px; }
.stops b { font-weight: 700; }
.hscroll { height: 16px; background: #f0f0f0; border-bottom: 1px solid #f7f7f7; display: flex; align-items: center; }
.hscroll path, .vscroll path { fill: none; stroke: #333; stroke-width: 2; }
.vscroll .dim { stroke: #999; stroke-width: 1; }
.hthumb { flex: 1069; height: 100%; background: #cbcbcb; } .hrest { flex: 187; }

.map { position: relative; border-radius: 4px 4px 0 0; overflow: hidden; }
.map-svg { width: 100%; height: auto; font-family: "Noto Sans", sans-serif; text-anchor: middle; }
.ctl-left { position: absolute; top: 8px; left: 8px; display: flex; align-items: flex-start; gap: 8px; }
.ctl, .zoom { background: #fff; border: 1px solid #bbb; border-radius: 3px; justify-content: center; }
.route-ctl { width: 32px; height: 32px; }
.zoom { width: 26px; height: 50px; margin-bottom: 8px; }
.zoom button { width: 100%; height: 24px; justify-content: center; }
.zoom button + button { border-top: 1px solid #ccc; }
.full-ctl { width: 26px; height: 26px; }
.car-ctl { position: absolute; top: 8px; right: 8px; width: 39px; height: 34px; justify-content: center; border-radius: 4px; background: #8c80ff; box-shadow: 0 1px 4px rgba(0, 0, 0, .6); }
.layers { position: absolute; right: 8px; bottom: 21px; padding: 4px 9px; background: #fff; border-radius: 3px; box-shadow: 0 0 12px rgba(0, 0, 0, .55); color: #555; font-weight: 700; font-size: 12px; }
.layers label { display: flex; align-items: center; gap: 5px; height: 21px; }
.layers input { appearance: none; width: 13px; height: 13px; border: 1px solid #222; background: #fff; }
.attribution { position: absolute; right: 0; bottom: 0; padding: 0 3px; background: rgba(255, 255, 255, .7); font: 400 9px/13px "Liberation Sans", sans-serif; color: #333; }
.attribution a { color: #0078a8; }
.speed { width: 100%; height: 43px; padding: 0 17px 0 14px; justify-content: space-between; font-weight: 700; font-size: 11px; color: #444; }

.vscroll { width: 16px; flex: none; background: #f0f0f0; display: flex; flex-direction: column; border-left: 1px solid #fafafa; }
.vtop { height: 26px; } .vthumb { flex: 314; background: #cbcbcb; } .vrest { flex: 537; }
.help { position: fixed; right: 21px; bottom: 21px; width: 40px; height: 34px; border-radius: 17px; background: #8f84fd; justify-content: center; }

.sea { fill: #aad3df; }
.map-svg path { stroke-linejoin: round; }
.coast { fill: none; stroke: #bf8ec3; stroke-width: 6; stroke-dasharray: 7 7; }
.water, .river { fill: none; stroke: #a4cfdd; stroke-width: 4; }
.river { stroke-width: 8; }
.boundary { fill: none; stroke: #cf9bd3; stroke-width: 4; stroke-dasharray: 13 6; }
.protected { fill: none; stroke: #a3c79b; stroke-width: 8; }
.rail { fill: none; stroke: #777; stroke-width: 5; }
.rail-dash { fill: none; stroke: #f1eee8; stroke-width: 6; stroke-dasharray: 10 14; }
.white-road { fill: none; stroke: #fff; stroke-width: 6; }
.yellow-case { fill: none; stroke: #cdd08c; stroke-width: 10; }
.yellow { fill: none; stroke: #f5f7a8; stroke-width: 8; }
.orange-road { fill: none; stroke: #f9c88d; stroke-width: 11; }
.salmon-road { fill: none; stroke: #f5ab93; stroke-width: 11; }
.motorway { fill: none; stroke: #e38d9e; stroke-width: 13; }
.spur { fill: none; stroke: #e7a0ad; stroke-width: 9; }
.places { font-size: 27px; fill: #333; stroke: #fff; stroke-opacity: .7; stroke-width: 5; paint-order: stroke; }
.places.small { font-size: 25px; } .places.big { font-size: 31px; }
.italic { font-style: italic; font-size: 24px; fill: #777; }
.park { font-size: 27px; font-style: italic; fill: #1f8029; stroke: #e4f4de; stroke-width: 5; paint-order: stroke; }
.airport { font-size: 24px; font-style: italic; fill: #8060bd; stroke: #f5f0fa; stroke-width: 4; paint-order: stroke; }
.exits { font-size: 27px; font-style: italic; fill: #b32f2f; stroke: #fff; stroke-width: 3; paint-order: stroke; }
.shields { font-size: 26px; fill: #333; }
.sh-salmon { fill: #f5dcce; stroke: #dba78f; stroke-width: 3; }
.sh-yellow { fill: #eceecb; stroke: #bfc39a; stroke-width: 3; }
.sh-pink { fill: #eabfc8; stroke: #d37f93; stroke-width: 3; }
```

FILE: map.js
```js
(function () {
  var NS = 'http://www.w3.org/2000/svg';
  var seed = 7;
  function rnd() { seed = (seed * 16807) % 2147483647; return seed / 2147483647; }
  function add(parent, d, attrs) {
    var p = document.createElementNS(NS, 'path');
    p.setAttribute('d', d);
    for (var k in attrs) p.setAttribute(k, attrs[k]);
    parent.appendChild(p);
    return p;
  }

  // Fields, orchards and farm tracks of the irrigated plain
  var farm = document.getElementById('farmland');
  var greens = '', pale = '', greys = '', lines = '', i, x, y;
  function field(x, y, w, h, a) {
    var c = Math.cos(a), s = Math.sin(a);
    return 'M' + x.toFixed() + ' ' + y.toFixed() + 'l' + (w * c).toFixed() + ' ' + (w * s).toFixed() +
      ' ' + (-h * s).toFixed() + ' ' + (h * c).toFixed() + ' ' + (-w * c).toFixed() + ' ' + (-w * s).toFixed() + 'Z';
  }
  for (i = 0; i < 3800; i++) {
    x = 30 + rnd() * 2080; y = 680 + rnd() * 1020;
    greens += field(x, y, 6 + rnd() * 26, 5 + rnd() * 18, .35 + (rnd() > .5 ? 1.2 : 0));
  }
  for (i = 0; i < 500; i++) {
    greens += field(30 + rnd() * 540, 960 + rnd() * 420, 20 + rnd() * 50, 15 + rnd() * 35, .5 + rnd());
  }
  for (i = 0; i < 700; i++) pale += field(30 + rnd() * 2080, 680 + rnd() * 1020, 10 + rnd() * 30, 8 + rnd() * 22, .4);
  for (i = 0; i < 800; i++) greys += field(900 + rnd() * 1100, 680 + rnd() * 600, 4 + rnd() * 10, 4 + rnd() * 8, .4);
  for (i = 0; i < 900; i++) {
    var a = 1.1 + rnd() * .5 + (rnd() > .55 ? 1.57 : 0), l = 30 + rnd() * 130;
    lines += 'M' + (30 + rnd() * 2080).toFixed() + ' ' + (680 + rnd() * 1020).toFixed() +
      'l' + (Math.cos(a) * l).toFixed() + ' ' + (Math.sin(a) * l).toFixed();
  }
  add(farm, greens, { fill: '#c9ebbd', 'fill-opacity': .85 });
  add(farm, pale, { fill: '#f0ede6' });
  add(farm, greys, { fill: '#d9d8d4' });
  add(farm, lines, { fill: 'none', stroke: '#cfcfc8', 'stroke-width': 2 });

  // Winding minor tracks in the dry uplands
  var tracks = '';
  for (i = 0; i < 260; i++) {
    x = 30 + rnd() * 2620; y = 33 + rnd() * 850;
    if (x > 500 && x < 1200 && rnd() > .4) continue;
    tracks += 'M' + x.toFixed() + ' ' + y.toFixed();
    var dir = rnd() * 6.28;
    for (var k = 0; k < 8; k++) {
      dir += (rnd() - .5) * 1.1;
      tracks += 'l' + (Math.cos(dir) * 20).toFixed() + ' ' + (Math.sin(dir) * 20).toFixed();
    }
  }
  add(document.getElementById('tracks'), tracks, { fill: 'none', stroke: '#d3d1cd', 'stroke-width': 2 });

  [[850, 1615], [2351, 434], [2333, 482], [2550, 532]].forEach(function (p) {
    add(document.getElementById('planes'), 'M-2-14H2L3-4 14 3V6L3 3 2 9 6 12V14H-6V12L-2 9-3 3-14 6V3L-3-4Z',
      { transform: 'translate(' + p[0] + ' ' + p[1] + ')' });
  });

  var routes = document.getElementById('routes');
  function arrow(x, y, deg, color) {
    add(routes, 'M-26-17 0 0-26 17', {
      fill: 'none', stroke: color, 'stroke-width': 8, 'stroke-linecap': 'round',
      transform: 'translate(' + x + ' ' + y + ') rotate(' + deg + ')'
    });
  }
  function route(color, d, step, start) {
    var p = add(routes, d, { fill: 'none', stroke: color, 'stroke-width': 12, 'stroke-linecap': 'round' });
    var total = p.getTotalLength();
    for (var s = start; s < total; s += step) {
      var q = p.getPointAtLength(s), r = p.getPointAtLength(Math.max(0, s - 6));
      arrow(q.x, q.y, Math.atan2(q.y - r.y, q.x - r.x) * 180 / Math.PI, color);
    }
  }
  function burst(color, cx, cy, rx, ry, n) {
    var d = '';
    for (var j = 0; j < n; j++) {
      var t = j / n * 6.283 + rnd() * .3, f = .5 + rnd() * .7;
      d += 'M' + (cx + (rnd() - .5) * rx * .4).toFixed() + ' ' + (cy + (rnd() - .5) * ry * .4).toFixed() +
        'L' + (cx + Math.cos(t) * rx * f).toFixed() + ' ' + (cy + Math.sin(t) * ry * f).toFixed();
    }
    add(routes, d, { fill: 'none', stroke: color, 'stroke-width': 7 });
  }

  route('#5e2d50', 'M2620 1300 2590 1315 2550 1325 2500 1310 2440 1300 2480 1275 2450 1265 2445 1300M2450 1265 2410 1235 2355 1220 2310 1230 2220 1175 2150 1110 2130 1080 2000 980 1830 865 1680 760 1600 710 1510 640', 196, 90);
  route('#46b41e', 'M2190 440 2170 470 2250 500 2330 500 2380 560 2455 585 2465 650 2480 710V800L2460 870 2430 970 2420 1000 2415 1110 2360 1210 2400 1240M2450 1240 2490 1310 2600 1315 2640 1280 2665 1270', 155, 85);
  add(routes, 'M2287 1255V1230', { stroke: '#5e2d50', 'stroke-width': 8 });
  add(routes, 'M2355 1220 2390 1236 2410 1235 2450 1265 2450 1300 2510 1318', { fill: 'none', stroke: '#5e2d50', 'stroke-width': 12 });
  route('#a4e73e', 'M1600 600 1620 620 1710 615 1800 600 1870 560 1920 510 1960 480 2010 490 2070 490 2150 465 2210 430', 95, 90);
  route('#2a9512', 'M1290 545 1310 520 1380 525 1415 535 1435 585 1480 595 1500 630 1510 655 1560 660', 75, 60);
  route('#23095f', 'M1285 570 1310 580 1350 625V700L1390 720 1440 730 1490 705 1510 650 1530 630 1590 612 1575 565', 80, 60);
  burst('#23095f', 1280, 592, 32, 36, 34);
  burst('#5ae0e8', 1600, 590, 36, 48, 16);
  burst('#5ae0e8', 1550, 650, 30, 26, 8);
  route('#e0cc35', 'M1560 590 1610 590 1670 565 1740 540 1800 520 1920 490 2020 450 2150 410', 105, 90);
  route('#f9520f', 'M2150 410 2020 450 1920 490 1800 520 1740 540 1670 565 1640 460 1570 495 1510 495 1435 525 1380 525 1340 510 1300 500 1265 530', 108, 20);
  [[1755, 535], [1880, 495], [2000, 456], [2085, 432]].forEach(function (p) { arrow(p[0], p[1], -16, '#e0cc35'); });
  add(routes, 'M1290 535 1287 565M1275 558H1310', { stroke: '#f9520f', 'stroke-width': 8 });
  add(routes, 'M1535 545 1545 600 1550 660', { fill: 'none', stroke: '#ff00e6', 'stroke-width': 14 });
  burst('#ff00e6', 1540, 556, 34, 30, 14);
  burst('#ff00e6', 1545, 605, 26, 34, 10);
  burst('#ff00e6', 1560, 662, 42, 28, 15);
  burst('#611bc9', 1580, 697, 40, 30, 30);
  burst('#48a0ff', 2184, 414, 40, 36, 30);
}());
```
